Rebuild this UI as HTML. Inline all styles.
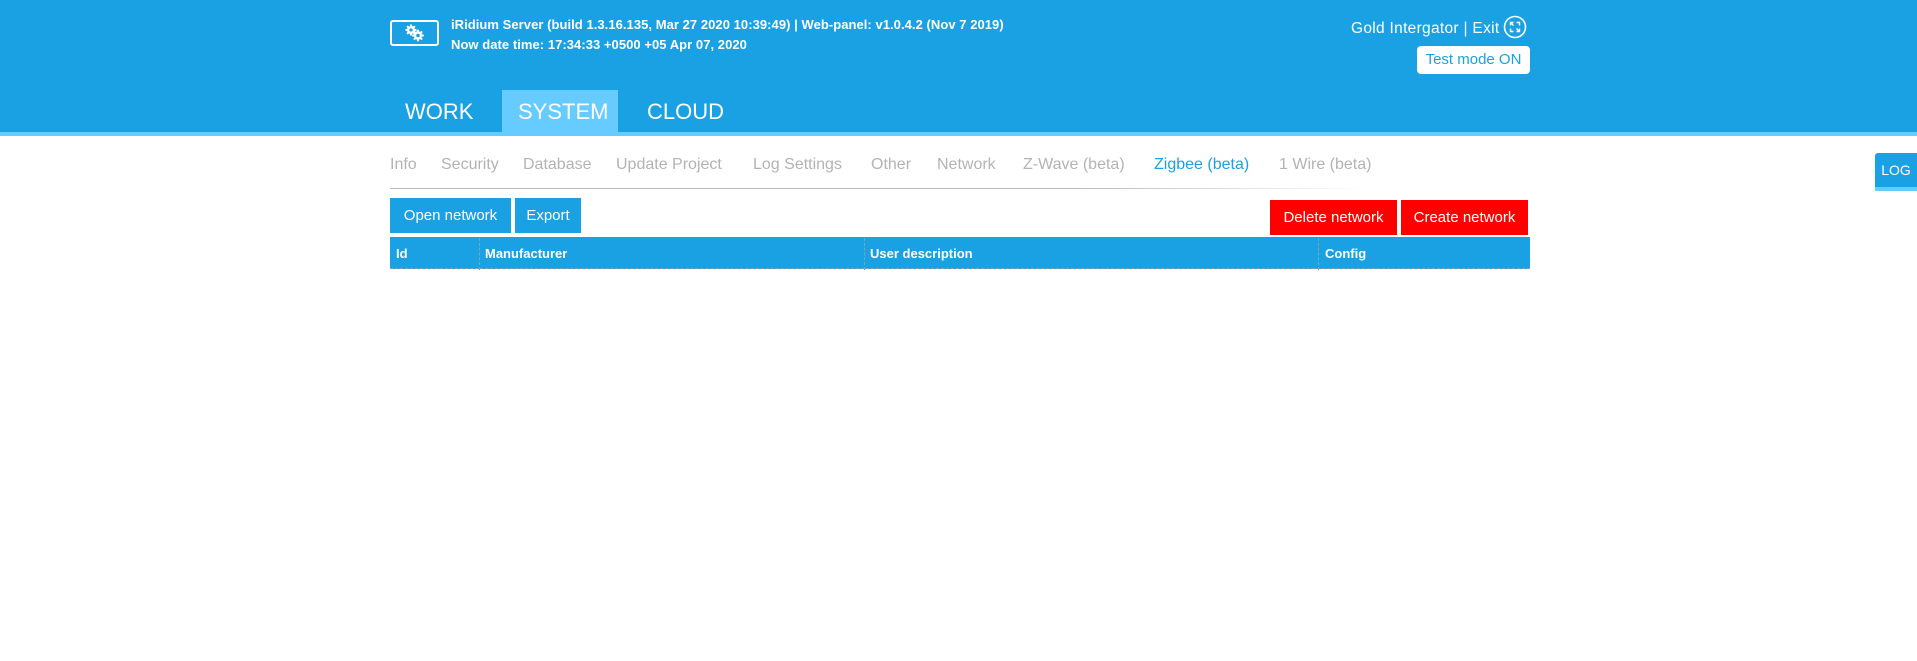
<!DOCTYPE html>
<html><head><meta charset="utf-8"><style>
*{margin:0;padding:0;box-sizing:border-box}
body{width:1917px;height:661px;background:#fff;font-family:"Liberation Sans",sans-serif;position:relative;overflow:hidden}
.a{position:absolute;white-space:nowrap}
#hd{position:absolute;left:0;top:0;width:1917px;height:132px;background:#1aa1e3}
#st{position:absolute;left:0;top:132px;width:1917px;height:4px;background:#66ccff}
.w{color:#fff}
.sub{color:#b3b3b3;font-size:16px;top:156px}
.btn{position:absolute;color:#fff;font-size:15px;text-align:center;line-height:35px;height:35px}
.th{color:#fff;font-size:13px;top:246px;font-weight:bold}
.sep{position:absolute;top:238px;height:32px;border-left:1px dashed #7aa}
</style></head><body>
<div id="hd"></div><div id="st"></div>
<div class="a" style="left:390px;top:20px;width:49px;height:26px;border:2px solid #fff;border-radius:3px"></div>
<svg class="a" style="left:404px;top:23px" width="22" height="20" viewBox="0 0 22 20">
<g fill="#fff"><circle cx="7" cy="7" r="4"/><rect x="6" y="1.5" width="2" height="11"/><rect x="1.5" y="6" width="11" height="2"/><rect x="6" y="1.5" width="2" height="11" transform="rotate(45 7 7)"/><rect x="6" y="1.5" width="2" height="11" transform="rotate(-45 7 7)"/></g>
<circle cx="7" cy="7" r="1.6" fill="#1aa1e3"/>
<g fill="#fff"><circle cx="14" cy="12.5" r="4.2"/><rect x="13" y="6.7" width="2" height="11.6"/><rect x="8.2" y="11.5" width="11.6" height="2"/><rect x="13" y="6.7" width="2" height="11.6" transform="rotate(45 14 12.5)"/><rect x="13" y="6.7" width="2" height="11.6" transform="rotate(-45 14 12.5)"/></g>
<circle cx="14" cy="12.5" r="1.8" fill="#1aa1e3"/></svg>
<div class="a w" style="left:451px;top:17px;font-size:13px;font-weight:bold;letter-spacing:0.05px">iRidium Server (build 1.3.16.135, Mar 27 2020 10:39:49) | Web-panel: v1.0.4.2 (Nov 7 2019)</div>
<div class="a w" style="left:451px;top:37px;font-size:13px;font-weight:bold;letter-spacing:0.05px">Now date time: 17:34:33 +0500 +05 Apr 07, 2020</div>
<div class="a" style="left:502px;top:90px;width:116px;height:42px;background:#66ccff"></div>
<div class="a w" style="left:405px;top:99px;font-size:22px">WORK</div>
<div class="a w" style="left:518px;top:99px;font-size:22px">SYSTEM</div>
<div class="a w" style="left:647px;top:99px;font-size:22px">CLOUD</div>
<div class="a w" style="left:1351px;top:20px;font-size:15.5px;letter-spacing:0.3px">Gold Intergator | Exit</div>
<svg class="a" style="left:1503px;top:15px" width="24" height="24" viewBox="0 0 24 24"><circle cx="12" cy="12" r="10.5" fill="none" stroke="#fff" stroke-width="1.6"/><path d="M7.5 10.5V7.5h3M7.5 7.5l3 3M16.5 13.5v3h-3M16.5 16.5l-3-3M13.5 7.5h3v3M10.5 16.5h-3v-3" fill="none" stroke="#fff" stroke-width="1.4"/></svg>
<div class="a" style="left:1417px;top:46px;width:113px;height:28px;background:#fff;border-radius:4px;color:#1aa1e3;font-size:15px;line-height:28px;text-align:center">Test mode ON</div>
<div class="a" style="left:1875px;top:153px;width:42px;height:38px;background:#1aa1e3;border-radius:3px 0 0 0;border-bottom:4px solid #66ccff;color:#fff;font-size:14px;line-height:34px;text-align:center">LOG</div>
<div class="a sub" style="left:390px">Info</div>
<div class="a sub" style="left:441px">Security</div>
<div class="a sub" style="left:523px">Database</div>
<div class="a sub" style="left:616px">Update Project</div>
<div class="a sub" style="left:753px">Log Settings</div>
<div class="a sub" style="left:871px">Other</div>
<div class="a sub" style="left:937px">Network</div>
<div class="a sub" style="left:1023px">Z-Wave (beta)</div>
<div class="a sub" style="left:1154px;color:#1aa1e3">Zigbee (beta)</div>
<div class="a sub" style="left:1279px">1 Wire (beta)</div>
<div class="a" style="left:390px;top:188px;width:980px;height:1px;background:linear-gradient(to right,#bbb,#bbb 70%,#fff)"></div>
<div class="btn" style="left:390px;top:198px;width:121px;background:#1aa1e3">Open network</div>
<div class="btn" style="left:515px;top:198px;width:66px;background:#1aa1e3">Export</div>
<div class="btn" style="left:1270px;top:200px;width:127px;background:#f00">Delete network</div>
<div class="btn" style="left:1401px;top:200px;width:127px;background:#f00">Create network</div>
<div class="a" style="left:390px;top:237px;width:1140px;height:32px;background:#1aa1e3;border-bottom:1px dashed #999"></div>
<div class="sep" style="left:479px"></div><div class="sep" style="left:864px"></div><div class="sep" style="left:1318px"></div>
<div class="a th" style="left:396px">Id</div>
<div class="a th" style="left:485px">Manufacturer</div>
<div class="a th" style="left:870px">User description</div>
<div class="a th" style="left:1325px">Config</div>
</body></html>
